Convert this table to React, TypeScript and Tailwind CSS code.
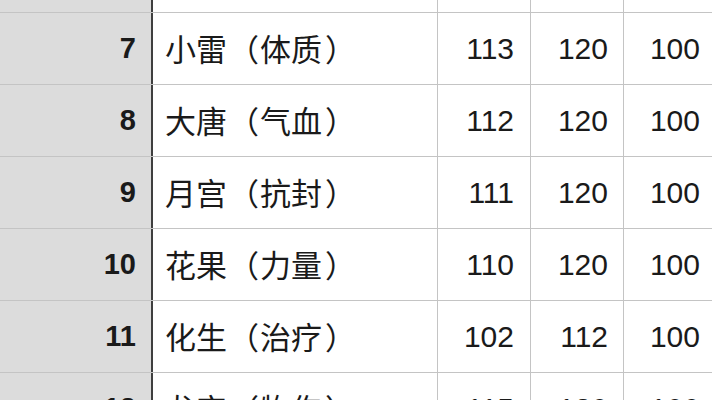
const rows = [
  { n: "7", name: "小雷", tag: "体质", a: "113", b: "120", c: "100" },
  { n: "8", name: "大唐", tag: "气血", a: "112", b: "120", c: "100" },
  { n: "9", name: "月宫", tag: "抗封", a: "111", b: "120", c: "100" },
  { n: "10", name: "花果", tag: "力量", a: "110", b: "120", c: "100" },
  { n: "11", name: "化生", tag: "治疗", a: "102", b: "112", c: "100" },
  { n: "12", name: "龙宫", tag: "物伤", a: "115", b: "120", c: "100" },
];

const num = "font-['Liberation_Sans','Helvetica',sans-serif]";
const cjk = "font-['Noto_Sans_CJK_SC',sans-serif]";
const half = "[font-feature-settings:'halt']";

type RowProps = { n: string; name: string; tag: string; a: string; b: string; c: string; h: string };

function Row({ n, name, tag, a, b, c, h }: RowProps) {
  return (
    <div className={`flex ${h} border-b border-[#c4c4c4] shrink-0`}>
      <div className={`w-[151px] shrink-0 bg-[#dcdcdc] flex items-center justify-end pr-[15px] text-[29px] font-bold text-[#1a1a1a] ${num}`}>
        {n}
      </div>
      <div className={`w-[286px] shrink-0 border-l-2 border-[#3f3f3f] flex items-center pl-[12px] text-[31px] text-[#1a1a1a] whitespace-nowrap ${cjk}`}>
        {name && (
          <>
            <span>{name}</span>
            <span className="inline-block w-[33px] text-right pr-[1px]">
              <span className={half}>（</span>
            </span>
            <span>{tag}</span>
            <span className="inline-block w-[31px] text-left pl-[3px]">
              <span className={half}>）</span>
            </span>
          </>
        )}
      </div>
      <div className={`w-[93px] shrink-0 border-l border-[#c4c4c4] flex items-center justify-end pr-[16px] text-[30px] text-[#1a1a1a] ${num}`}>
        {a}
      </div>
      <div className={`w-[93px] shrink-0 border-l border-[#c4c4c4] flex items-center justify-end pr-[15px] text-[30px] text-[#1a1a1a] ${num}`}>
        {b}
      </div>
      <div className={`w-[89px] shrink-0 border-l border-[#c4c4c4] flex items-center justify-end pr-[12px] text-[30px] text-[#1a1a1a] ${num}`}>
        {c}
      </div>
    </div>
  );
}

export default function App() {
  return (
    <div className="w-[712px] h-[400px] overflow-hidden bg-white flex flex-col">
      <Row n="" name="" tag="" a="" b="" c="" h="h-[13px]" />
      {rows.map((r) => (
        <Row key={r.n} {...r} h="h-[72px]" />
      ))}
    </div>
  );
}
